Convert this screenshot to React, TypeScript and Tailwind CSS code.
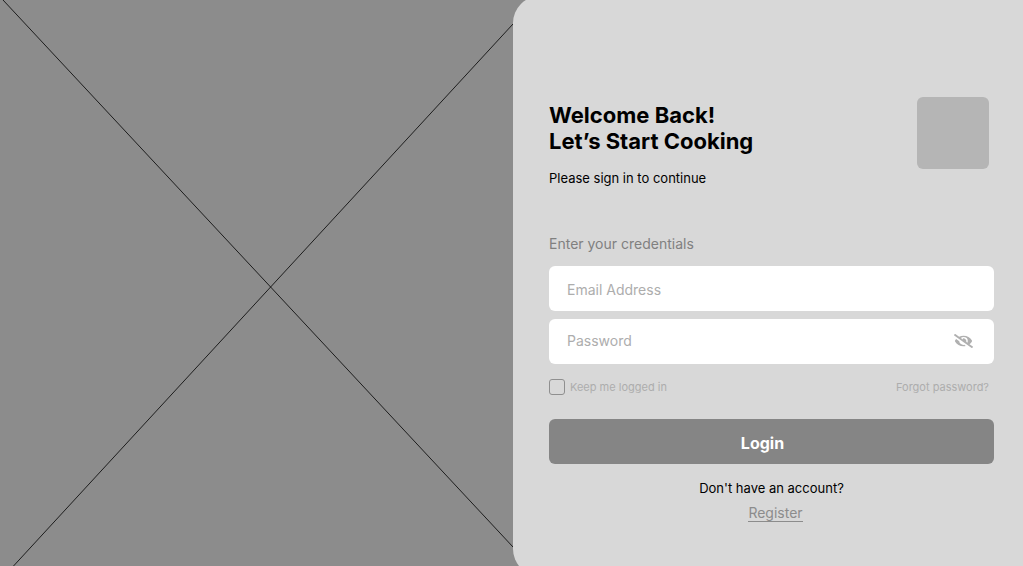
import { useState } from "react";

function EyeOffIcon() {
  return (
    <svg viewBox="0 0 640 512" preserveAspectRatio="none" className="h-3.5 w-[19px]" fill="currentColor" aria-hidden="true">
      <path d="M320 400c-75.85 0-137.25-58.71-142.9-133.11L72.2 185.82c-13.79 17.3-26.48 35.59-36.72 55.59a32.35 32.35 0 0 0 0 29.19C89.71 376.41 197.07 448 320 448c26.91 0 52.87-4 77.89-10.46L346 397.39a144.13 144.13 0 0 1-26 2.61zm313.82 58.1l-110.55-85.44a331.25 331.25 0 0 0 81.25-102.07 32.35 32.35 0 0 0 0-29.19C550.29 135.59 442.93 64 320 64a308.15 308.15 0 0 0-147.32 37.7L45.46 3.37A16 16 0 0 0 23 6.18L3.37 31.45A16 16 0 0 0 6.18 53.9l588.36 454.73a16 16 0 0 0 22.46-2.81l19.64-25.27a16 16 0 0 0-2.82-22.45zm-183.72-142l-39.3-30.38A94.75 94.75 0 0 0 416 256a94.76 94.76 0 0 0-121.31-92.21A47.65 47.65 0 0 1 304 192a46.64 46.64 0 0 1-1.54 10l-73.61-56.89A142.31 142.31 0 0 1 320 112a143.92 143.92 0 0 1 144 144c0 21.63-5.29 41.79-13.9 60.11z" />
    </svg>
  );
}

export default function App() {
  const [visible, setVisible] = useState(false);

  return (
    <main className="grid min-h-screen grid-cols-[513fr_510fr] overflow-hidden bg-[#8c8c8c] font-['Inter',sans-serif] text-black">
      <div className="relative">
        <svg
          className="absolute inset-0 h-full w-full"
          viewBox="0 0 513 566"
          preserveAspectRatio="none"
          stroke="black"
          strokeWidth="0.8"
          aria-hidden="true"
        >
          <path d="M3 0 513 547M13.5 566 513 24" fill="none" />
        </svg>
      </div>

      <section className="-mt-1 -mb-2.5 rounded-l-[27px] bg-[#d8d8d8] pt-[101px] pr-[29px] pb-10 pl-9">
        <header className="flex items-start justify-between pr-[5px]">
          <div className="pt-[5px]">
            <h1 className="text-[22px] leading-[26px] font-bold">
              Welcome Back!
              <br />
              Let’s Start Cooking
            </h1>
            <p className="mt-3.5 text-[13px] leading-5">Please sign in to continue</p>
          </div>
          <div className="size-[72px] rounded-md bg-[#b5b5b5]" />
        </header>

        <form onSubmit={(e) => e.preventDefault()}>
          <h2 className="mt-[46px] text-sm leading-5 text-[#808080]">Enter your credentials</h2>
          <input
            type="email"
            aria-label="Email Address"
            placeholder="Email Address"
            className="mt-3 block h-[45px] w-full rounded-md bg-white px-[18px] pt-0.5 text-sm outline-none placeholder:text-[#adadad]"
          />
          <div className="mt-2 flex h-[45px] items-center rounded-md bg-white pr-[21px] pb-px pl-[18px]">
            <input
              type={visible ? "text" : "password"}
              aria-label="Password"
              placeholder="Password"
              className="min-w-0 flex-1 bg-transparent text-sm outline-none placeholder:text-[#adadad]"
            />
            <button
              type="button"
              aria-label="Show password"
              onClick={() => setVisible(!visible)}
              className="text-[#b0b0b0]"
            >
              <EyeOffIcon />
            </button>
          </div>

          <div className="mt-[15px] flex items-center justify-between pr-[5px] text-[11px] leading-4 text-[#adadad]">
            <label className="flex items-center gap-[5px]">
              <input
                type="checkbox"
                className="size-4 appearance-none rounded-[3px] border border-[#8f8f8f] checked:bg-[#858585]"
              />
              Keep me logged in
            </label>
            <a href="#forgot">Forgot password?</a>
          </div>

          <button
            type="submit"
            className="mt-6 h-[45px] w-full rounded-md bg-[#858585] pt-0.5 pr-[18px] text-base font-bold text-white"
          >
            Login
          </button>
        </form>

        <footer className="mt-3.5 text-center">
          <p className="text-[13px] leading-5">Don't have an account?</p>
          <p className="mt-[5px] pl-2 text-sm">
            <a
              href="#register"
              className="inline-block border-b border-[#8c8c8c] leading-4 text-[#8c8c8c]"
            >
              Register
            </a>
          </p>
        </footer>
      </section>
    </main>
  );
}
